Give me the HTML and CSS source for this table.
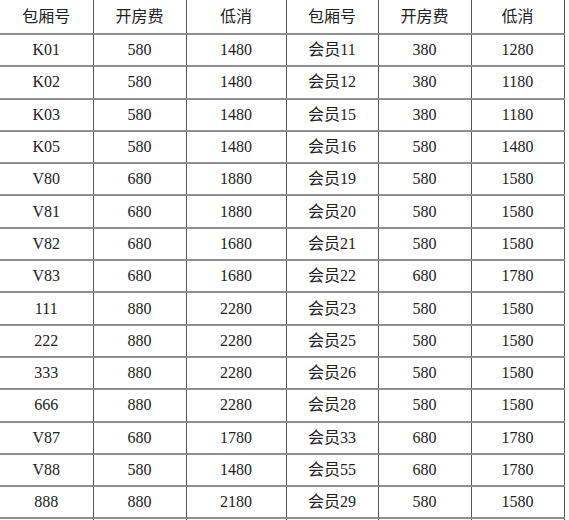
FILE: index.html
```html
<!DOCTYPE html>
<html lang="zh">
<head>
<meta charset="utf-8">
<link rel="stylesheet" href="styles.css">
</head>
<body>
<table class="price-table">
  <colgroup>
    <col class="c1"><col class="c2"><col class="c3"><col class="c4"><col class="c5"><col class="c6">
  </colgroup>
  <thead>
    <tr class="head"><th>包厢号</th><th>开房费</th><th>低消</th><th>包厢号</th><th>开房费</th><th>低消</th></tr>
  </thead>
  <tbody>
    <tr><td>K01</td><td>580</td><td>1480</td><td>会员11</td><td>380</td><td>1280</td></tr>
    <tr><td>K02</td><td>580</td><td>1480</td><td>会员12</td><td>380</td><td>1180</td></tr>
    <tr><td>K03</td><td>580</td><td>1480</td><td>会员15</td><td>380</td><td>1180</td></tr>
    <tr><td>K05</td><td>580</td><td>1480</td><td>会员16</td><td>580</td><td>1480</td></tr>
    <tr><td>V80</td><td>680</td><td>1880</td><td>会员19</td><td>580</td><td>1580</td></tr>
    <tr><td>V81</td><td>680</td><td>1880</td><td>会员20</td><td>580</td><td>1580</td></tr>
    <tr><td>V82</td><td>680</td><td>1680</td><td>会员21</td><td>580</td><td>1580</td></tr>
    <tr><td>V83</td><td>680</td><td>1680</td><td>会员22</td><td>680</td><td>1780</td></tr>
    <tr><td>111</td><td>880</td><td>2280</td><td>会员23</td><td>580</td><td>1580</td></tr>
    <tr><td>222</td><td>880</td><td>2280</td><td>会员25</td><td>580</td><td>1580</td></tr>
    <tr><td>333</td><td>880</td><td>2280</td><td>会员26</td><td>580</td><td>1580</td></tr>
    <tr><td>666</td><td>880</td><td>2280</td><td>会员28</td><td>580</td><td>1580</td></tr>
    <tr><td>V87</td><td>680</td><td>1780</td><td>会员33</td><td>680</td><td>1780</td></tr>
    <tr><td>V88</td><td>580</td><td>1480</td><td>会员55</td><td>680</td><td>1780</td></tr>
    <tr><td>888</td><td>880</td><td>2180</td><td>会员29</td><td>580</td><td>1580</td></tr>
    <tr><td>&nbsp;</td><td></td><td></td><td></td><td></td><td></td></tr>
  </tbody>
</table>
</body>
</html>
```

FILE: styles.css
```css
html, body {
  margin: 0;
  padding: 0;
  background: #fff;
  overflow: hidden;
}

.price-table {
  border-collapse: collapse;
  table-layout: fixed;
  width: 564px;
  font-family: "Liberation Serif", "Noto Sans CJK SC", serif;
  font-size: 16px;
  color: #222;
}

.c1 { width: 93px; }
.c2 { width: 93px; }
.c3 { width: 100px; }
.c4 { width: 92px; }
.c5 { width: 93px; }
.c6 { width: 93px; }

.price-table th,
.price-table td {
  font-weight: normal;
  text-align: center;
  vertical-align: middle;
  padding: 0;
  height: 30.3px;
  border-left: 1px solid #222;
  border-right: 1px solid #555;
  border-bottom: 2px solid #8f8f8f;
  line-height: 18px;
}

.price-table th:first-child,
.price-table td:first-child {
  border-left: none;
}

.price-table .head th {
  height: 33px;
}
```
